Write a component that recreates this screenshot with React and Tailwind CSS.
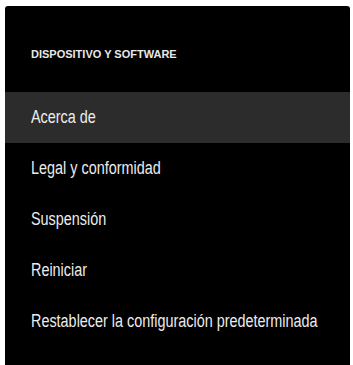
import React from 'react';

const items = [
  'Acerca de',
  'Legal y conformidad',
  'Suspensión',
  'Reiniciar',
  'Restablecer la configuración predeterminada',
];

export default function App() {
  return (
    <div className="w-[353px] h-[365px] bg-white pl-[5px] pr-[3px] pt-[6px] overflow-hidden">
      <div
        className="h-full bg-black rounded-t-[3px] flex flex-col"
        style={{ fontFamily: '"Liberation Sans", Arial, sans-serif' }}
      >
        <div className="h-[86px] flex items-center pl-[26px] pt-[10px]">
          <span className="text-[11px] font-bold text-[#e8e8e8] whitespace-nowrap">
            DISPOSITIVO Y SOFTWARE
          </span>
        </div>
        {items.map((item, i) => (
          <div
            key={item}
            className={`h-[51px] shrink-0 flex items-center pl-[26px] ${i === 0 ? 'bg-[#2c2c2c]' : ''}`}
          >
            <span className="inline-block whitespace-nowrap text-[18px] text-[#ececec] origin-left scale-x-[0.8]">
              {item}
            </span>
          </div>
        ))}
      </div>
    </div>
  );
}
